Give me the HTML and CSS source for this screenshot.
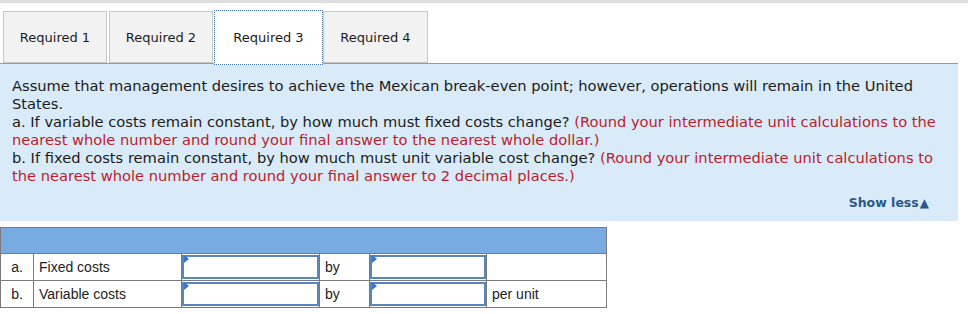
FILE: index.html
```html
<!DOCTYPE html>
<html>
<head>
<meta charset="utf-8">
<link rel="stylesheet" href="styles.css">
</head>
<body>
<div class="topbar"></div>
<div class="tabbar">
  <div class="tab tab1">Required 1</div>
  <div class="tab tab2">Required 2</div>
  <div class="tab tab3 active">Required 3</div>
  <div class="tab tab4">Required 4</div>
</div>
<div class="panel">
  <p class="q">Assume that management desires to achieve the Mexican break-even point; however, operations will remain in the United States.<br>
  a. If variable costs remain constant, by how much must fixed costs change? <span class="red">(Round your intermediate unit calculations to the nearest whole number and round your final answer to the nearest whole dollar.)</span><br>
  b. If fixed costs remain constant, by how much must unit variable cost change? <span class="red">(Round your intermediate unit calculations to the nearest whole number and round your final answer to 2 decimal places.)</span></p>
  <div class="showless">Show less<span class="tri">▲</span></div>
</div>
<table class="answers">
  <colgroup>
    <col class="c1"><col class="c2"><col class="c3"><col class="c4"><col class="c5"><col class="c6">
  </colgroup>
  <tr class="head"><td colspan="6"></td></tr>
  <tr>
    <td class="lbl">a.</td>
    <td class="txt">Fixed costs</td>
    <td class="inp"><div class="box"><span class="flag"></span></div></td>
    <td class="txt">by</td>
    <td class="inp"><div class="box"><span class="flag"></span></div></td>
    <td class="txt"></td>
  </tr>
  <tr>
    <td class="lbl">b.</td>
    <td class="txt">Variable costs</td>
    <td class="inp"><div class="box"><span class="flag"></span></div></td>
    <td class="txt">by</td>
    <td class="inp"><div class="box"><span class="flag"></span></div></td>
    <td class="txt">per unit</td>
  </tr>
</table>
</body>
</html>
```
FILE: styles.css
```css
html, body {
  margin: 0;
  padding: 0;
  background: #ffffff;
}
body {
  width: 968px;
  font-family: "DejaVu Sans", Verdana, sans-serif;
  color: #1b1b1b;
}
.topbar {
  height: 3px;
  background: #dedede;
}
.tabbar {
  display: flex;
  align-items: flex-start;
  padding: 8px 0 0 3px;
  height: 52px;
  width: 955px;
  border-bottom: 1px solid #9a9a9a;
}
.tab {
  box-sizing: border-box;
  height: 52px;
  border: 1px solid #c8c8c8;
  background: #f2f2f2;
  font-size: 13px;
  display: flex;
  align-items: center;
  justify-content: center;
  padding-top: 1px;
}
.tab1 { width: 104px; margin-right: 2px; }
.tab2 { width: 104px; margin-right: 1px; }
.tab3 {
  width: 109px;
  height: 55px;
  margin-top: -1px;
  margin-bottom: -3px;
  background: #ffffff;
  border: 1px dotted #3f6fae;
  position: relative;
  padding-top: 0;
}
.tab4 { width: 105px; }
.panel {
  width: 958px;
  box-sizing: border-box;
  background: #d9eaf8;
  padding: 13px 12px 9px 12px;
}
.q {
  margin: 0;
  font-size: 14.66px;
  line-height: 18px;
}
.red {
  color: #bb1d2c;
}
.showless {
  margin-top: 9px;
  text-align: right;
  padding-right: 17px;
  font-weight: bold;
  font-size: 12.5px;
  line-height: 18px;
  color: #2b5787;
}
.tri {
  font-size: 12px;
  margin-left: 1px;
}
.answers {
  margin-top: 6px;
  border-collapse: collapse;
  table-layout: fixed;
  width: 607px;
  font-family: "Liberation Sans", Arial, sans-serif;
  font-size: 14px;
  color: #222;
}
.answers td {
  border: 1px solid #7a7a7a;
  height: 25px;
  padding: 0;
  vertical-align: middle;
}
.c1 { width: 33px; }
.c2 { width: 148px; }
.c3 { width: 138px; }
.c4 { width: 50px; }
.c5 { width: 117px; }
.c6 { width: 120px; }
.head td {
  background: #79abe3;
}
.lbl {
  text-align: center;
}
.txt {
  padding-left: 5px !important;
  padding-bottom: 1px !important;
}
.inp {
  padding: 0;
}
.box {
  position: relative;
  box-sizing: border-box;
  height: 24px;
  width: 100%;
  border: 2px solid #5a86c0;
  background: #ffffff;
}
.flag {
  position: absolute;
  left: 0;
  width: 0;
  height: 0;
  border-top: 4px solid transparent;
  border-bottom: 4px solid transparent;
  border-left: 5px solid #3a76c4;
  top: -2px;
}
```
